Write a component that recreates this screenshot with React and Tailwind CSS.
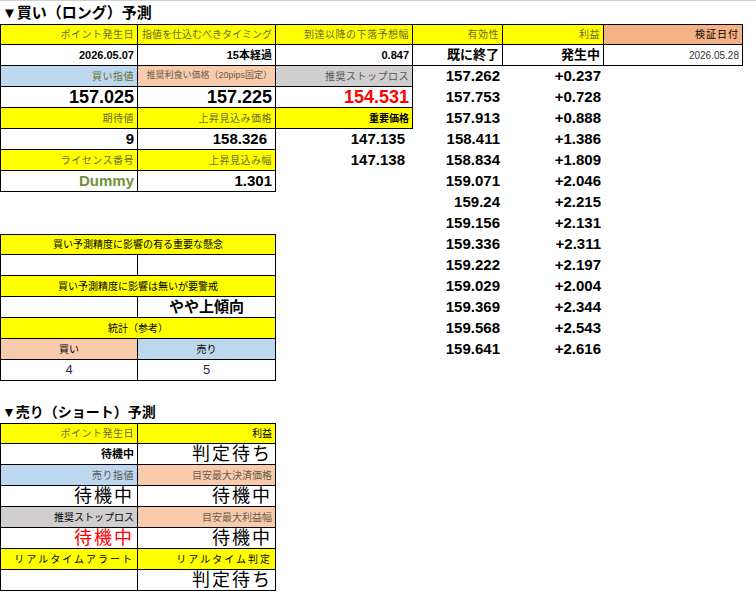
import React from 'react';

const W = ['w-[138px]', 'w-[138px]', 'w-[137px]', 'w-[90px]', 'w-[101px]', 'w-[139px]'];
const font = { fontFamily: '"Liberation Sans", "Noto Sans CJK JP", sans-serif' };

// one spreadsheet cell
const Cell = ({ w, cls = '', children }) => (
  <div className={`${w} h-[21px] shrink-0 flex items-center px-[3px] whitespace-nowrap overflow-hidden ${cls}`}>
    {children}
  </div>
);

const lbl = 'text-[10px] text-[#6b6b2e] justify-end tracking-[0.5px]';
const yel = 'bg-[#ffff00] border-r border-b border-black';
const box = 'border-r border-b border-black';
const big = 'text-[18px] font-bold justify-end';
const mid = 'text-[15px] font-bold justify-end';

const dv = ['157.262', '157.753', '157.913', '158.411', '158.834', '159.071', '159.24', '159.156', '159.336', '159.222', '159.029', '159.369', '159.568', '159.641'];
const ev = ['+0.237', '+0.728', '+0.888', '+1.386', '+1.809', '+2.046', '+2.215', '+2.131', '+2.311', '+2.197', '+2.004', '+2.344', '+2.543', '+2.616'];

const left = [
  [
    <Cell key="a" w={W[0]} cls={`${yel} border-t border-l ${lbl}`}>ポイント発生日</Cell>,
    <Cell key="b" w={W[1]} cls={`${yel} border-t text-[10px] text-[#6b6b2e] justify-end`}>指値を仕込むべきタイミング</Cell>,
    <Cell key="c" w={W[2]} cls={`${yel} border-t ${lbl}`}>到達以降の下落予想幅</Cell>,
  ],
  [
    <Cell key="a" w={W[0]} cls={`${box} border-l text-[11px] font-bold justify-end`}>2026.05.07</Cell>,
    <Cell key="b" w={W[1]} cls={`${box} text-[11px] font-bold justify-end`}>15本経過</Cell>,
    <Cell key="c" w={W[2]} cls={`${box} text-[11px] font-bold justify-end`}>0.847</Cell>,
  ],
  [
    <Cell key="a" w={W[0]} cls={`${box} border-l bg-[#bdd7ee] ${lbl}`}>買い指値</Cell>,
    <Cell key="b" w={W[1]} cls={`${box} bg-[#f8cbad] text-[9px] text-[#6b5a4a] justify-end px-[2px]`}>推奨利食い価格（20pips固定）</Cell>,
    <Cell key="c" w={W[2]} cls={`${box} bg-[#d0cece] ${lbl} text-[#555]`}>推奨ストップロス</Cell>,
  ],
  [
    <Cell key="a" w={W[0]} cls={`${box} border-l ${big}`}>157.025</Cell>,
    <Cell key="b" w={W[1]} cls={`${box} ${big}`}>157.225</Cell>,
    <Cell key="c" w={W[2]} cls={`${box} ${big} text-[#ff0000]`}>154.531</Cell>,
  ],
  [
    <Cell key="a" w={W[0]} cls={`${yel} border-l ${lbl}`}>期待値</Cell>,
    <Cell key="b" w={W[1]} cls={`${yel} ${lbl}`}>上昇見込み価格</Cell>,
    <Cell key="c" w={W[2]} cls={`${yel} text-[10px] font-bold justify-end`}>重要価格</Cell>,
  ],
  [
    <Cell key="a" w={W[0]} cls={`${box} border-l ${mid}`}>9</Cell>,
    <Cell key="b" w={W[1]} cls={`${box} ${mid} pr-[8px]`}>158.326</Cell>,
    <Cell key="c" w={W[2]} cls={`${mid} pr-[8px]`}>147.135</Cell>,
  ],
  [
    <Cell key="a" w={W[0]} cls={`${yel} border-l ${lbl}`}>ライセンス番号</Cell>,
    <Cell key="b" w={W[1]} cls={`${yel} ${lbl}`}>上昇見込み幅</Cell>,
    <Cell key="c" w={W[2]} cls={`${mid} pr-[8px]`}>147.138</Cell>,
  ],
  [
    <Cell key="a" w={W[0]} cls={`${box} border-l ${mid} text-[#6f8f3a]`}>Dummy</Cell>,
    <Cell key="b" w={W[1]} cls={`${box} ${mid}`}>1.301</Cell>,
  ],
  [], [],
  [<Cell key="a" w="w-[276px]" cls={`${yel} border-t border-l text-[10px] justify-center`}>買い予測精度に影響の有る重要な懸念</Cell>],
  [<Cell key="a" w={W[0]} cls={`${box} border-l`} />, <Cell key="b" w={W[1]} cls={box} />],
  [<Cell key="a" w="w-[276px]" cls={`${yel} border-l text-[10px] justify-center`}>買い予測精度に影響は無いが要警戒</Cell>],
  [<Cell key="a" w={W[0]} cls={`${box} border-l`} />, <Cell key="b" w={W[1]} cls={`${box} text-[15px] font-bold justify-center`}>やや上傾向</Cell>],
  [<Cell key="a" w="w-[276px]" cls={`${yel} border-l text-[10px] justify-center`}>統計（参考）</Cell>],
  [
    <Cell key="a" w={W[0]} cls={`${box} border-l bg-[#f8cbad] text-[10px] justify-center`}>買い</Cell>,
    <Cell key="b" w={W[1]} cls={`${box} bg-[#bdd7ee] text-[10px] justify-center`}>売り</Cell>,
  ],
  [
    <Cell key="a" w={W[0]} cls={`${box} border-l text-[13px] justify-center text-[#1f2a5a]`}>4</Cell>,
    <Cell key="b" w={W[1]} cls={`${box} text-[13px] justify-center text-[#1f2a5a]`}>5</Cell>,
  ],
];

const right = (i) => {
  if (i === 0) return [
    <Cell key="d" w={W[3]} cls={`${yel} border-t ${lbl}`}>有効性</Cell>,
    <Cell key="e" w={W[4]} cls={`${yel} border-t ${lbl}`}>利益</Cell>,
    <Cell key="f" w={W[5]} cls={`${box} border-t bg-[#f4b183] text-[10px] justify-end tracking-[1px]`}>検証日付</Cell>,
  ];
  if (i === 1) return [
    <Cell key="d" w={W[3]} cls={`${box} text-[13px] font-bold justify-end`}>既に終了</Cell>,
    <Cell key="e" w={W[4]} cls={`${box} text-[13px] font-bold justify-end`}>発生中</Cell>,
    <Cell key="f" w={W[5]} cls={`${box} text-[10px] justify-end text-[#333]`}>2026.05.28</Cell>,
  ];
  const k = i - 2;
  if (k < dv.length) return [
    <Cell key="d" w={W[3]} cls={mid}>{dv[k]}</Cell>,
    <Cell key="e" w={W[4]} cls={mid}>{ev[k]}</Cell>,
  ];
  return [];
};

const sell = [
  [['ポイント発生日', `${yel} border-t ${lbl}`], ['利益', `${yel} border-t text-[10px] justify-end`]],
  [['待機中', `${box} text-[11px] font-bold justify-end`], ['判定待ち', `${box} text-[18px] justify-end tracking-[2px]`]],
  [['売り指値', `${box} bg-[#bdd7ee] ${lbl} text-[#555]`], ['目安最大決済価格', `${box} bg-[#f8cbad] text-[10px] text-[#6b5a4a] justify-end`]],
  [['待機中', `${box} text-[18px] justify-end tracking-[2px]`], ['待機中', `${box} text-[18px] justify-end tracking-[2px]`]],
  [['推奨ストップロス', `${box} bg-[#d0cece] text-[10px] justify-end`], ['目安最大利益幅', `${box} bg-[#f8cbad] text-[10px] text-[#6b5a4a] justify-end`]],
  [['待機中', `${box} text-[18px] justify-end tracking-[2px] text-[#ff0000]`], ['待機中', `${box} text-[18px] justify-end tracking-[2px]`]],
  [['リアルタイムアラート', `${yel} text-[10px] justify-end tracking-[2px]`], ['リアルタイム判定', `${yel} text-[10px] justify-end tracking-[2px]`]],
  [['', box], ['判定待ち', `${box} text-[18px] justify-end tracking-[2px]`]],
];

export default function App() {
  return (
    <div className="w-[756px] h-[602px] bg-white text-black overflow-hidden" style={font}>
      <div className="h-[2px] border-t border-[#d0d0d0]" />
      <div className="h-[22px] flex items-center pl-[2px] text-[15px] font-bold">▼買い（ロング）予測</div>
      <div className="flex flex-col">
        {left.map((cells, i) => (
          <div key={i} className="flex h-[21px]">
            <div className="w-[413px] shrink-0 flex">{cells}</div>
            {right(i)}
          </div>
        ))}
      </div>
      <div className="h-[21px]" />
      <div className="h-[21px] flex items-end pl-[2px] text-[14px] font-bold">▼売り（ショート）予測</div>
      <div className="flex flex-col">
        {sell.map((r, i) => (
          <div key={i} className="flex h-[21px]">
            <Cell w={W[0]} cls={`border-l ${r[0][1]}`}>{r[0][0]}</Cell>
            <Cell w={W[1]} cls={r[1][1]}>{r[1][0]}</Cell>
          </div>
        ))}
      </div>
    </div>
  );
}
